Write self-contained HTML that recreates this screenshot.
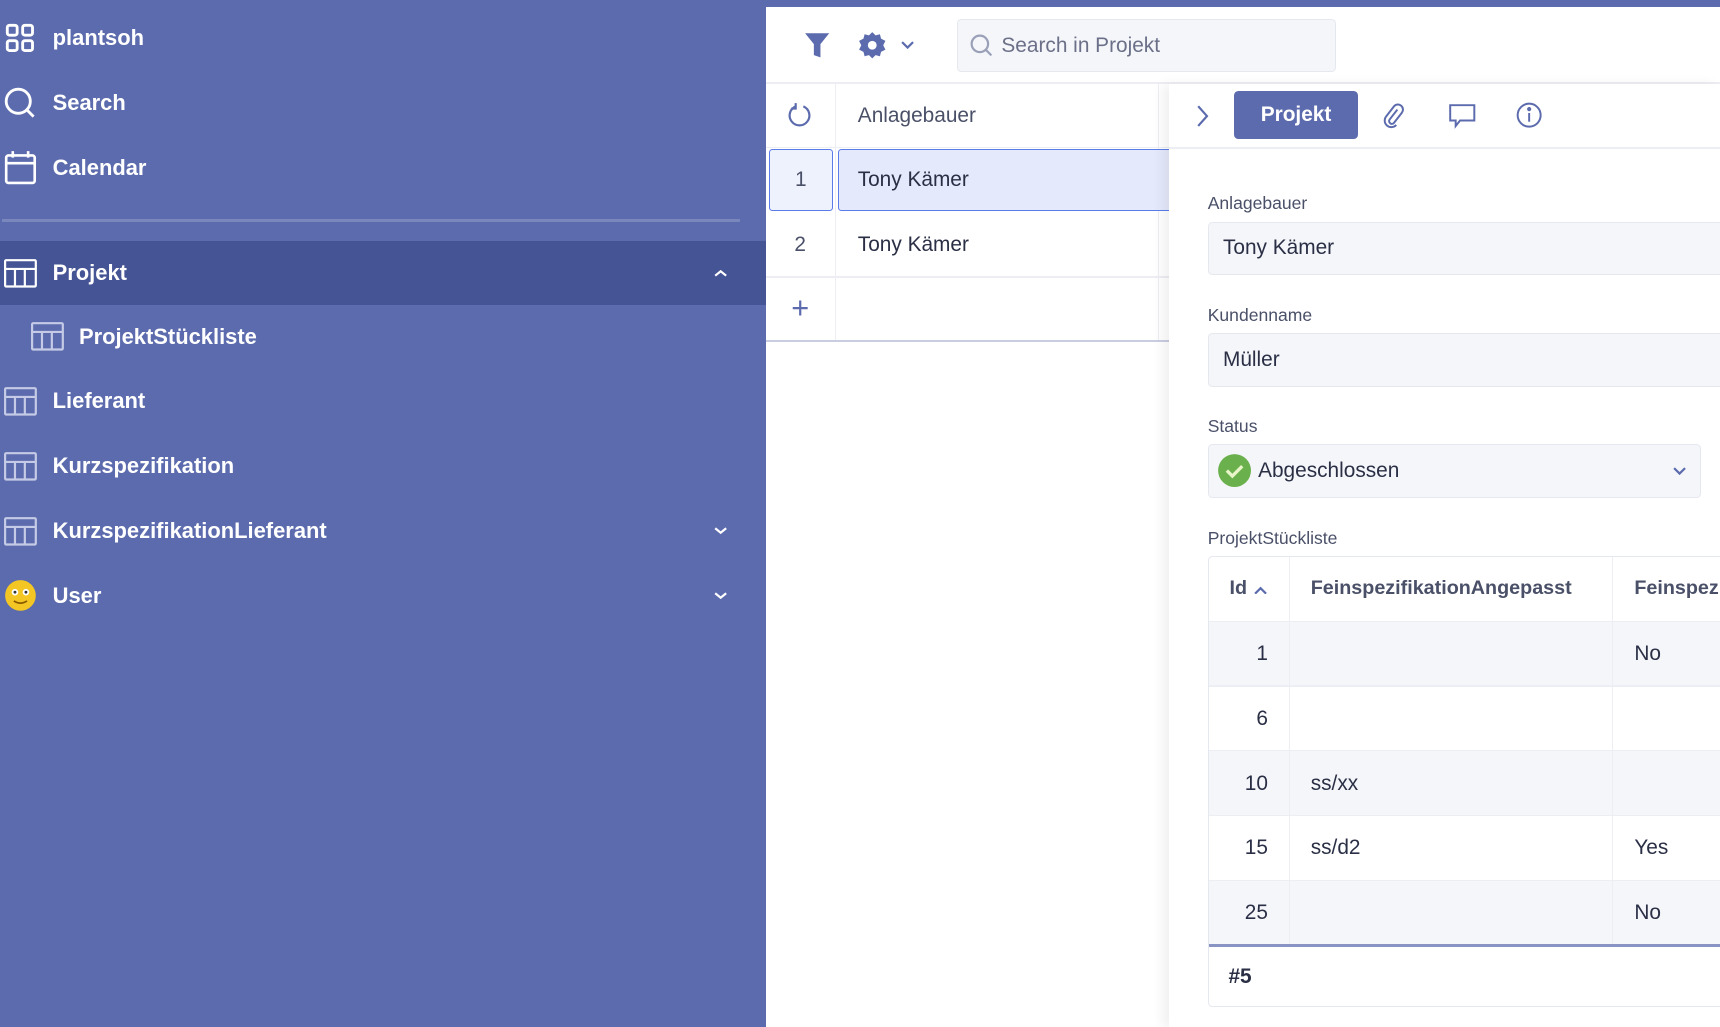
<!DOCTYPE html>
<html><head><meta charset="utf-8"><style>
html,body{margin:0;padding:0;width:1720px;height:1027px;overflow:hidden;background:#fff}
#w{zoom:1.09694;width:1568px;height:937px;position:relative;font-family:"Liberation Sans",sans-serif;color:#2a2f45;overflow:hidden}
.a{position:absolute}
#sb{left:0;top:0;width:698px;height:937px;background:#5c6bad;color:#fff}
.it{position:absolute;left:0;width:698px;height:58px;font-size:20px;font-weight:bold;display:flex;align-items:center}
.it svg{position:absolute;left:4px}
.it span{position:absolute;left:48px}
.lbl{position:absolute;font-size:16px;color:#4a5068}
.inp{position:absolute;background:#f5f6fa;border:1px solid #e6e8ef;border-radius:4px;font-size:19px;display:flex;align-items:center;box-sizing:border-box;padding-left:13px}
.cell{position:absolute;font-size:19px;display:flex;align-items:center;box-sizing:border-box}
</style></head><body><div id="w">
<div id="sb" class="a">
 <div class="it" style="top:6px"><svg width="30" height="30" viewBox="0 0 30 30" fill="none" stroke="#fff" stroke-width="2.6"><rect x="3" y="3" width="9" height="9" rx="2"/><rect x="17" y="3" width="9" height="9" rx="2"/><rect x="3" y="17" width="9" height="9" rx="2"/><rect x="17" y="17" width="9" height="9" rx="2"/></svg><span>plantsoh</span></div>
 <div class="it" style="top:65px"><svg width="30" height="30" viewBox="0 0 30 30" fill="none" stroke="#fff" stroke-width="2.6"><circle cx="13" cy="13" r="11"/><path d="M21 21l6 6"/></svg><span>Search</span></div>
 <div class="it" style="top:124px"><svg width="30" height="32" viewBox="0 0 30 32" fill="none" stroke="#fff" stroke-width="2.4"><rect x="2" y="5" width="26" height="25" rx="2"/><path d="M2 12h26M8 1v6M22 1v6"/></svg><span>Calendar</span></div>
 <div class="a" style="left:2px;top:200px;width:673px;height:2px;background:#7a87bd"></div>
 <div class="it" style="top:220px;background:#455495"><svg width="30" height="28" viewBox="0 0 30 28" fill="none" stroke="#fff" stroke-width="2"><rect x="1" y="2" width="28" height="24" rx="1"/><path d="M1 10h28M10 10v16M19 10v16"/></svg><span>Projekt</span><svg style="left:650px" width="14" height="10" viewBox="0 0 14 10" fill="none" stroke="#fff" stroke-width="2"><path d="M2 7l5-4 5 4"/></svg></div>
 <div class="it" style="top:278px"><svg style="left:28px" width="30" height="28" viewBox="0 0 30 28" fill="none" stroke="#c5cbe6" stroke-width="2"><rect x="1" y="2" width="28" height="24" rx="1"/><path d="M1 10h28M10 10v16M19 10v16"/></svg><span style="left:72px">ProjektStückliste</span></div>
 <div class="it" style="top:337px"><svg width="30" height="28" viewBox="0 0 30 28" fill="none" stroke="#c5cbe6" stroke-width="2"><rect x="1" y="2" width="28" height="24" rx="1"/><path d="M1 10h28M10 10v16M19 10v16"/></svg><span>Lieferant</span></div>
 <div class="it" style="top:396px"><svg width="30" height="28" viewBox="0 0 30 28" fill="none" stroke="#c5cbe6" stroke-width="2"><rect x="1" y="2" width="28" height="24" rx="1"/><path d="M1 10h28M10 10v16M19 10v16"/></svg><span>Kurzspezifikation</span></div>
 <div class="it" style="top:455px"><svg width="30" height="28" viewBox="0 0 30 28" fill="none" stroke="#c5cbe6" stroke-width="2"><rect x="1" y="2" width="28" height="24" rx="1"/><path d="M1 10h28M10 10v16M19 10v16"/></svg><span>KurzspezifikationLieferant</span><svg style="left:650px" width="14" height="10" viewBox="0 0 14 10" fill="none" stroke="#fff" stroke-width="2"><path d="M2 3l5 4 5-4"/></svg></div>
 <div class="it" style="top:514px"><svg width="30" height="30" viewBox="0 0 30 30"><circle cx="15" cy="15" r="14" fill="#f3c623"/><circle cx="10" cy="12" r="3" fill="#fff"/><circle cx="20" cy="12" r="3" fill="#fff"/><circle cx="10" cy="12" r="1.3" fill="#333"/><circle cx="20" cy="12" r="1.3" fill="#333"/><path d="M9 20q6 4 12 0" stroke="#8a5a00" stroke-width="1.6" fill="none"/></svg><span>User</span><svg style="left:650px" width="14" height="10" viewBox="0 0 14 10" fill="none" stroke="#fff" stroke-width="2"><path d="M2 3l5 4 5-4"/></svg></div>
</div>
<div class="a" style="left:698px;top:0;width:870px;height:6px;background:#5c6bad"></div>
<!-- toolbar -->
<svg class="a" style="left:733px;top:28px" width="24" height="26" viewBox="0 0 24 26"><path d="M1 2h22l-8 10v12l-6-2V12z" fill="#5c6bad"/></svg>
<svg class="a" style="left:782px;top:28px" width="26" height="26" viewBox="0 0 26 26"><path d="M13 1l3 3 4-1 1 4 4 2-2 4 2 4-4 2-1 4-4-1-3 3-3-3-4 1-1-4-4-2 2-4-2-4 4-2 1-4 4 1z" fill="#5c6bad"/><circle cx="13" cy="13" r="4" fill="#fff"/></svg>
<svg class="a" style="left:821px;top:37px" width="12" height="8" viewBox="0 0 12 8" fill="none" stroke="#5c6bad" stroke-width="2"><path d="M1 1l5 5 5-5"/></svg>
<div class="inp" style="left:872px;top:17px;width:346px;height:49px;color:#6b7088;padding-left:40px">Search in Projekt</div>
<svg class="a" style="left:884px;top:31px" width="22" height="22" viewBox="0 0 22 22" fill="none" stroke="#9aa0b8" stroke-width="2"><circle cx="9" cy="9" r="7.5"/><path d="M14.5 14.5l5 5"/></svg>
<div class="a" style="left:698px;top:75px;width:870px;height:2px;background:#eceef3"></div>
<!-- grid -->
<div class="a" style="left:761px;top:77px;width:1px;height:234px;background:#eceef3"></div>
<div class="a" style="left:1056px;top:77px;width:1px;height:234px;background:#eceef3"></div>
<svg class="a" style="left:718px;top:93px" width="22" height="24" viewBox="0 0 22 24" fill="none" stroke="#5c6bad" stroke-width="2"><path d="M7 4A9 9 0 1 0 14 4"/><path d="M7 1v5H3"/></svg>
<div class="cell" style="left:782px;top:77px;height:58px;color:#4a5068">Anlagebauer</div>
<div class="a" style="left:698px;top:134px;width:368px;height:1px;background:#eceef3"></div>
<div class="cell" style="left:701px;top:136px;width:58px;height:56px;background:#eef2fd;border:1.5px solid #5b7be8;border-radius:3px;justify-content:center;color:#4a5068">1</div>
<div class="cell" style="left:764px;top:136px;width:302px;height:56px;background:#e4e9fb;border:1.5px solid #5b7be8;border-right:none;border-radius:3px 0 0 3px;padding-left:17px">Tony Kämer</div>
<div class="a" style="left:698px;top:252px;width:368px;height:1px;background:#eceef3"></div>
<div class="cell" style="left:698px;top:194px;width:63px;height:58px;justify-content:center;color:#4a5068">2</div>
<div class="cell" style="left:782px;top:194px;height:58px">Tony Kämer</div>
<div class="cell" style="left:698px;top:252px;width:63px;height:58px;justify-content:center;color:#5c6bad;font-size:28px">+</div>
<div class="a" style="left:698px;top:310px;width:368px;height:2px;background:#c9cde0"></div>
<!-- detail panel -->
<div class="a" style="left:1066px;top:77px;width:502px;height:860px;background:#fff;box-shadow:-6px 0 10px rgba(0,0,0,0.06)"></div>
<svg class="a" style="left:1090px;top:95px" width="12" height="22" viewBox="0 0 12 22" fill="none" stroke="#5c6bad" stroke-width="2"><path d="M2 2l8 9-8 9"/></svg>
<div class="cell" style="left:1125px;top:83px;width:113px;height:44px;background:#5c6bad;border-radius:4px;color:#fff;font-weight:bold;justify-content:center">Projekt</div>
<svg class="a" style="left:1260px;top:94px" width="20" height="24" viewBox="0 0 20 24" fill="none" stroke="#5c6bad" stroke-width="1.8"><path d="M14 6l-7 9a2.5 2.5 0 0 0 4 3l7-9a4.5 4.5 0 0 0-7-6L4 12a6 6 0 0 0 9 8"/></svg>
<svg class="a" style="left:1320px;top:94px" width="26" height="24" viewBox="0 0 26 24" fill="none" stroke="#5c6bad" stroke-width="1.8"><path d="M2 2h22v14H11l-4 5v-5H2z"/></svg>
<svg class="a" style="left:1382px;top:93px" width="24" height="24" viewBox="0 0 24 24" fill="none" stroke="#5c6bad" stroke-width="1.8"><circle cx="12" cy="12" r="10.5"/><path d="M12 10v8"/><circle cx="12" cy="6.5" r="1" fill="#5c6bad"/></svg>
<div class="a" style="left:1066px;top:134px;width:502px;height:2px;background:#eceef3"></div>
<div class="lbl" style="left:1101px;top:176px">Anlagebauer</div>
<div class="inp" style="left:1101px;top:202px;width:480px;height:49px">Tony Kämer</div>
<div class="lbl" style="left:1101px;top:278px">Kundenname</div>
<div class="inp" style="left:1101px;top:304px;width:480px;height:49px">Müller</div>
<div class="lbl" style="left:1101px;top:379px">Status</div>
<div class="inp" style="left:1101px;top:405px;width:450px;height:49px;padding-left:45px">Abgeschlossen</div>
<svg class="a" style="left:1109px;top:413px" width="32" height="32" viewBox="0 0 32 32"><circle cx="16" cy="16" r="15" fill="#6ab04c"/><path d="M9 16l5 5 9-9" stroke="#e8f5c8" stroke-width="3" fill="none"/></svg>
<svg class="a" style="left:1525px;top:426px" width="12" height="8" viewBox="0 0 12 8" fill="none" stroke="#5c6bad" stroke-width="2"><path d="M1 1l5 5 5-5"/></svg>
<div class="lbl" style="left:1101px;top:481px">ProjektStückliste</div>
<!-- table -->
<div class="a" style="left:1101px;top:507px;width:480px;height:411px;border:1px solid #e6e8ef;border-radius:4px;box-sizing:border-box;overflow:hidden">
 <div class="a" style="left:0;top:59px;width:480px;height:59px;background:#f5f6fa"></div>
 <div class="a" style="left:0;top:177px;width:480px;height:59px;background:#f5f6fa"></div>
 <div class="a" style="left:0;top:295px;width:480px;height:59px;background:#f5f6fa"></div>
 <div class="a" style="left:0;top:58px;width:480px;height:1px;background:#eceef3"></div>
 <div class="a" style="left:0;top:117px;width:480px;height:1px;background:#eceef3"></div>
 <div class="a" style="left:0;top:176px;width:480px;height:1px;background:#eceef3"></div>
 <div class="a" style="left:0;top:235px;width:480px;height:1px;background:#eceef3"></div>
 <div class="a" style="left:0;top:294px;width:480px;height:1px;background:#eceef3"></div>
 <div class="a" style="left:0;top:353px;width:480px;height:2px;background:#8a94c4"></div>
 <div class="a" style="left:73px;top:0;width:1px;height:353px;background:#eceef3"></div>
 <div class="a" style="left:368px;top:0;width:1px;height:353px;background:#eceef3"></div>
 <div class="cell" style="left:19px;top:0;height:58px;color:#4a5068;font-weight:bold;font-size:18px">Id</div>
 <svg class="a" style="left:41px;top:26px" width="12" height="8" viewBox="0 0 12 8" fill="none" stroke="#5c6bad" stroke-width="2"><path d="M1 7l5-5 5 5"/></svg>
 <div class="cell" style="left:93px;top:0;height:58px;color:#4a5068;font-weight:bold;font-size:18px">FeinspezifikationAngepasst</div>
 <div class="cell" style="left:388px;top:0;height:58px;color:#4a5068;font-weight:bold;font-size:18px;white-space:nowrap">Feinspezifikation</div>
 <div class="cell" style="left:0;top:59px;width:54px;height:59px;justify-content:flex-end">1</div>
 <div class="cell" style="left:0;top:118px;width:54px;height:59px;justify-content:flex-end">6</div>
 <div class="cell" style="left:0;top:177px;width:54px;height:59px;justify-content:flex-end">10</div>
 <div class="cell" style="left:0;top:236px;width:54px;height:59px;justify-content:flex-end">15</div>
 <div class="cell" style="left:0;top:295px;width:54px;height:59px;justify-content:flex-end">25</div>
 <div class="cell" style="left:93px;top:177px;height:59px">ss/xx</div>
 <div class="cell" style="left:93px;top:236px;height:59px">ss/d2</div>
 <div class="cell" style="left:388px;top:59px;height:59px">No</div>
 <div class="cell" style="left:388px;top:236px;height:59px">Yes</div>
 <div class="cell" style="left:388px;top:295px;height:59px">No</div>
 <div class="cell" style="left:18px;top:355px;height:56px;font-weight:bold">#5</div>
</div>
</div></body></html>
